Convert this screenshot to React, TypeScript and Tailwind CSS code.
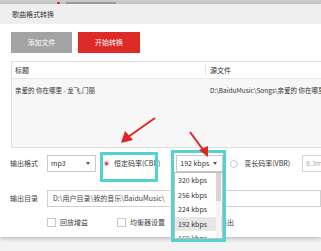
import React from "react";

const font = { fontFamily: '"Noto Sans CJK SC", "Noto Sans", sans-serif' };

function Select({ value, className }: { value: string; className: string }) {
  return (
    <div className={`relative flex h-[17px] shrink-0 items-center border border-[#c9c9c9] bg-white pl-[3px] text-[7px] text-[#333] ${className}`}>
      {value}
      <span className="absolute right-[5px] top-[6px] h-0 w-0 border-x-[2.5px] border-t-[3px] border-x-transparent border-t-[#555]" />
    </div>
  );
}

function Check({ label, className }: { label: string; className?: string }) {
  return (
    <div className={`flex shrink-0 items-center gap-[4px] ${className ?? ""}`}>
      <span className="h-[9px] w-[9px] border border-[#c9c9c9] bg-white" />
      <span className="text-[7px] text-[#444]">{label}</span>
    </div>
  );
}

const rates = ["320 kbps", "256 kbps", "224 kbps", "192 kbps", "160 kbps"];

export default function App() {
  return (
    <div className="relative h-[251px] w-[321px] overflow-hidden bg-[#f3f3f3]" style={font}>
      {/* strip of the window behind */}
      <div className="flex h-[4px] items-end bg-[#c9c9c9] pl-[57px]">
        <span className="h-[2px] w-[3px] bg-[#d33]" />
        <span className="ml-[6px] h-[2px] w-[50px] bg-[#9a9a9a]" />
      </div>

      <div className="h-[233px] bg-white shadow-[0_2px_4px_rgba(0,0,0,0.22)]">
        <div className="flex h-[20px] items-center bg-[#efefef] pl-[12px] text-[7px] text-[#333]">歌曲格式转换</div>

        <div className="pl-[10px] pt-[8px]">
          <div className="ml-[1px] flex gap-[6px]">
            <div className="flex h-[21px] w-[61px] items-center justify-center bg-[#a3a3a3] text-[7px] text-white">添加文件</div>
            <div className="flex h-[21px] w-[62px] items-center justify-center bg-[#dc2a26] text-[7px] text-white">开始转换</div>
          </div>

          <div className="ml-[1px] mt-[8px] h-[87px] border-y border-l border-[#dedede] bg-[#f7f7f7]">
            <div className="flex h-[16px] items-center bg-white text-[7px] text-[#333]">
              <div className="w-[194px] shrink-0 border-r border-[#e2e2e2] pl-[3px]">标题</div>
              <div className="pl-[4px]">源文件</div>
            </div>
            <div className="flex h-[24px] items-center border-t border-[#e6e6e6] text-[6.5px] text-[#333]">
              <div className="w-[194px] shrink-0 whitespace-nowrap pl-[3px]">亲爱的 你在哪里 - 龙飞,门丽</div>
              <div className="whitespace-nowrap pl-[4px]">D:\BaiduMusic\Songs\亲爱的 你在哪里</div>
            </div>
          </div>

          <div className="mt-[7px] flex h-[17px] items-center whitespace-nowrap">
            <span className="w-[37px] shrink-0 text-[7px] text-[#444]">输出格式</span>
            <Select value="mp3" className="w-[49px]" />
            <span className="ml-[9px] h-[3px] w-[3px] shrink-0 rounded-full bg-[#e0302b] ring-[1.5px] ring-[#f3d0d0]" />
            <span className="ml-[6px] shrink-0 text-[7px] text-[#333]">恒定码率(CBR)</span>
            <Select value="192 kbps" className="ml-[16px] w-[47px]" />
            <span className="ml-[7px] h-[8px] w-[8px] shrink-0 rounded-full border border-[#c9c9c9] bg-white" />
            <span className="ml-[6px] shrink-0 text-[7px] text-[#333]">变长码率(VBR)</span>
            <div className="ml-[12px] flex h-[17px] w-[40px] shrink-0 items-center border border-[#d5d5d5] pl-[3px] text-[7px] text-[#aaa]">8.3min</div>
          </div>

          <div className="mt-[18px] flex h-[17px] items-center whitespace-nowrap">
            <span className="w-[37px] shrink-0 text-[7px] text-[#444]">输出目录</span>
            <div className="flex h-[17px] flex-1 items-center border border-[#d0d0d0] pl-[5px] text-[7px] text-[#444]">D:\用户目录\我的音乐\BaiduMusic\</div>
          </div>

          <div className="mt-[10px] flex items-center whitespace-nowrap pl-[37px]">
            <Check label="回放增益" />
            <Check label="均衡器设置" className="ml-[29px]" />
            <Check label="淡入淡出" className="ml-[28px]" />
          </div>
        </div>
      </div>

      {/* highlight boxes */}
      <div className="absolute left-[100px] top-[152px] h-[30px] w-[58px] border-[3px] border-[#52d3d1]" />
      <div className="absolute left-[171px] top-[150px] h-[92px] w-[55px] border-[3px] border-[#52d3d1]" />

      {/* open dropdown */}
      <div className="absolute left-[174px] top-[172px] h-[67px] w-[49px] overflow-hidden border border-[#bdbdbd] bg-white">
        {rates.map((r) => (
          <div
            key={r}
            className={`flex h-[14.5px] items-center pl-[3px] text-[7px] text-[#333] ${r === "192 kbps" ? "bg-[#e6e6e6]" : ""}`}
          >
            {r}
          </div>
        ))}
        <div className="absolute right-[1px] top-0 h-full w-[5px] bg-[#f4f4f4]">
          <div className="h-[28px] w-full bg-[#dcd2d6]" />
        </div>
      </div>

      {/* arrows */}
      <svg className="absolute left-0 top-0" width="321" height="251" viewBox="0 0 321 251">
        <line x1="155" y1="118" x2="128" y2="137" stroke="#e02424" strokeWidth="2" />
        <polygon points="121,143 125,131 133,140" fill="#e02424" />
        <line x1="190" y1="132" x2="204" y2="151" stroke="#e02424" strokeWidth="2" />
        <polygon points="208,157 199,150 208,146" fill="#e02424" />
      </svg>
    </div>
  );
}
